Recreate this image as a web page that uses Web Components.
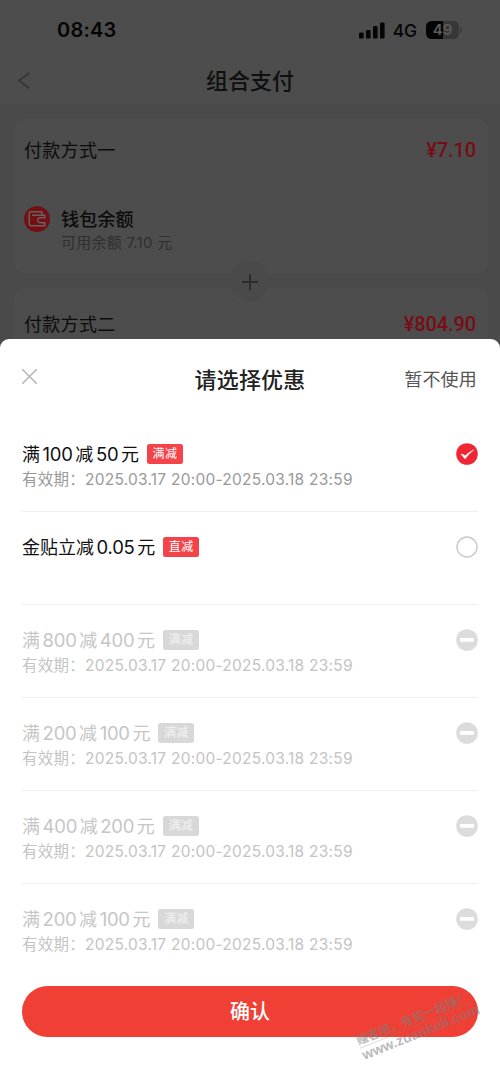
<!DOCTYPE html>
<html lang="zh-CN">
<head>
<meta charset="utf-8">
<title>组合支付</title>
<style>
html,body{margin:0;padding:0}
body{width:500px;height:1082px;overflow:hidden;background:#4a4a4a;font-family:Inter,"Noto Sans CJK SC",sans-serif;}
</style>
</head>
<body>
<pay-app></pay-app>
<script>
const define = (name, html) => {
  const t = document.createElement('template');
  t.innerHTML = html;
  customElements.define(name, class extends HTMLElement {
    constructor() {
      super();
      this.attachShadow({mode: 'open'}).appendChild(t.content.cloneNode(true));
    }
  });
};

define('status-bar', `
<style>
:host{display:flex;box-sizing:border-box;height:60px;padding:0 39px 0 57px;align-items:center;justify-content:space-between;background:#4d4d4d;color:#050505}
.time{font-size:20px;font-weight:600;line-height:24px;letter-spacing:.2px}
.right{display:flex;align-items:center}
.net{font-size:17.5px;font-weight:500;margin:1px 9px 0 8px;line-height:20px;letter-spacing:-.2px}
.bat{display:flex;align-items:center;justify-content:center;width:33px;height:18px;border-radius:5.5px;background:linear-gradient(90deg,#050505 50%,#373737 50%);color:#5c5c5c;font-size:15px;font-weight:600;line-height:18px}
.cap{width:2px;height:6px;border-radius:0 2px 2px 0;background:#3c3c3c;margin:0 -1px 0 1px}
</style>
<span class="time">08:43</span>
<div class="right">
<svg width="26" height="17" viewBox="0 0 26 17" fill="#050505"><rect x="0" y="10.5" width="4.6" height="6" rx="1.3"/><rect x="7" y="8" width="4.6" height="8.5" rx="1.3"/><rect x="14" y="4" width="4.6" height="12.5" rx="1.3"/><rect x="21" y="0.5" width="4.6" height="16" rx="1.3"/></svg>
<span class="net">4G</span><span class="bat">49</span><span class="cap"></span></div>`);

define('nav-bar', `
<style>
:host{display:grid;grid-template-columns:60px 1fr 60px;box-sizing:border-box;height:44px;align-items:center;background:#4d4d4d;color:#101010}
svg{margin:-4px 0 0 17px;display:block}
h1{margin:0;text-align:center;font-size:22px;line-height:32px;font-weight:500;padding-bottom:2px}
</style>
<svg width="14" height="17" viewBox="0 0 14 17" fill="none" stroke="#363636" stroke-width="1.6"><path d="M12.5 1 2 8.5 12 16"/></svg>
<h1><slot></slot></h1>`);

define('pay-card', `
<style>
:host{display:block;box-sizing:border-box;margin:0 12px 0 14px;padding:16px 12px 0 10px;border-radius:10px;background:#4d4d4d;color:#0c0c0c}
header{display:flex;justify-content:space-between;align-items:center;height:28px;font-size:18px;letter-spacing:.3px}
.price{color:#780d15;font:500 20px/28px Roboto,"Noto Sans CJK SC",sans-serif;letter-spacing:-.1px;padding-top:2px}
</style>
<header><slot name="title"></slot><span class="price"><slot name="price"></slot></span></header>
<slot></slot>`);

define('wallet-line', `
<style>
:host{display:flex;gap:11px;margin-top:44px}
svg{display:block;flex:none;margin-top:-1px}
.name{font-size:18px;line-height:24px;color:#0b0b0b;font-weight:500;margin-top:1px;letter-spacing:.2px}
.sub{font-size:15px;line-height:22px;color:#303030;letter-spacing:.25px}
</style>
<svg width="26" height="26" viewBox="0 0 26 26"><circle cx="13" cy="13" r="13" fill="#741014"/><g fill="none" stroke="#696063" stroke-width="1.5"><path d="M17.8 9.2V5.8H7.3Q5.2 5.8 5.2 7.9V17.6Q5.2 19.7 7.3 19.7H20.8V16.7H15.6A2.5 2.5 0 0 1 15.6 11.8H20.8V9.2H8"/></g></svg>
<div><div class="name">钱包余额</div><div class="sub">可用余额 7.10 元</div></div>`);

define('plus-joint', `
<style>
:host{display:flex;justify-content:center;align-items:center;height:15px}
span{display:flex;flex:none;align-items:center;justify-content:center;width:40px;height:40px;border-radius:50%;background:#4a4a4a;position:relative;z-index:1}
svg{display:block;margin-top:3px}
</style>
<span><svg width="16" height="16" viewBox="0 0 16 16" stroke="#2b2b2b" stroke-width="1.8"><path d="M8 0v16M0 8h16"/></svg></span>`);

define('coupon-tag', `
<style>
:host{display:flex;align-items:center;justify-content:center;width:36px;height:20px;border-radius:2.5px;background:var(--tag,#f5434a);color:var(--tag-text,#fff);font-size:12px;line-height:20px;letter-spacing:.4px}
span{padding-top:1px}
</style><span><slot></slot></span>`);

customElements.define('coupon-row', class extends HTMLElement {
  connectedCallback() {
    const state = this.getAttribute('state');
    const icons = {
      on: '<circle cx="11" cy="11" r="10.8" fill="#f02634"/><path d="M5.1 11.2 9 15.8q3.8-5.2 8.5-8.9-4.5 2.4-8.2 5.9-1.7-1.6-4.2-1.6z" fill="#fff" stroke="#fff" stroke-width=".7"/>',
      off: '<circle cx="11" cy="11" r="10" fill="#fff" stroke="#c8c8c8" stroke-width="1.4"/>',
      none: '<circle cx="11" cy="11" r="10.8" fill="#dcdcdc"/><rect x="4" y="9.1" width="14" height="3.6" rx=".6" fill="#fff"/>'
    };
    const title = this.getAttribute('label').replace(/[\d.]+/g, '<span class="n">$&</span>');
    this.attachShadow({mode: 'open'}).innerHTML = `
<style>
:host{display:flex;box-sizing:border-box;height:93.1px;padding-top:22px;justify-content:space-between;border-bottom:1px solid #efefef;color:#111}
:host([state=none]){color:#c6c6c6;--tag:#d8d8d8;--tag-text:#f2f2f2;--date:#c4c4c4}
:host(:last-of-type){border-color:transparent}
.t{display:flex;align-items:center;height:24px;font-size:18px;white-space:nowrap}
.n{font-size:18.5px;margin:1px 2.6px 0;letter-spacing:-.25px}
coupon-tag{margin:1px 0 0 8px}
.d{font-size:15.5px;line-height:22px;margin-top:4px;color:var(--date,#999);white-space:nowrap;letter-spacing:.24px}
.d b{font-weight:400;display:inline-block;width:63px}
svg{display:block;flex:none;margin-top:2px}
</style>
<div><div class="t">${title}<coupon-tag>${this.getAttribute('tag')}</coupon-tag></div>
${this.hasAttribute('date') ? `<div class="d"><b>有效期：</b>${this.getAttribute('date')}</div>` : ''}</div>
<svg width="22" height="22" viewBox="0 0 22 22">${icons[state]}</svg>`;
  }
});

define('coupon-sheet', `
<style>
:host{display:flex;flex-direction:column;box-sizing:border-box;height:743px;padding:0 22px;background:#fff;border-radius:9px 9px 0 0;position:relative;z-index:2}
header{display:grid;grid-template-columns:1fr auto 1fr;align-items:center;height:80px;flex:none}
h2{margin:0;font-size:22px;line-height:32px;font-weight:500;color:#222;letter-spacing:.2px;padding-top:1px}
.skip{justify-self:end;font-size:18px;line-height:26px;color:#555;margin:2px 1px 0 0;letter-spacing:.2px}
.x{display:block;margin-top:-5px}
.rows{height:567px;overflow:hidden;flex:none;display:flex;flex-direction:column}
::slotted(coupon-row){flex:none}
button{display:block;flex:none;width:456px;height:51px;border:0;padding:2px 0 0;border-radius:26px;background:#f04035;color:#fff;font:500 20px/49px Inter,"Noto Sans CJK SC",sans-serif}
</style>
<header><svg class="x" width="15" height="15" viewBox="0 0 15 15" stroke="#b5b5b5" stroke-width="1.5"><path d="M0 0 15 15M15 0 0 15"/></svg><h2>请选择优惠</h2><span class="skip">暂不使用</span></header>
<div class="rows"><slot></slot></div>
<button>确认</button>`);

define('water-mark', `
<style>
:host{position:absolute;z-index:3;left:354px;top:1034px;transform:rotate(-22deg);transform-origin:0 0;color:rgba(125,125,125,.55);white-space:nowrap;pointer-events:none}
.a{font-size:12px;line-height:15px;font-weight:700;border-bottom:1px solid rgba(125,125,125,.3);width:122px}
.b{font-size:14px;line-height:15px;font-weight:700;font-family:"Liberation Sans",sans-serif;letter-spacing:.1px}
</style><div class="a">赚客吧，有奖一起赚！</div><div class="b">www.zuanke8.com</div>`);

define('pay-app', `
<style>
:host{display:block;width:500px;height:1082px;position:relative;overflow:hidden}
main{box-sizing:border-box;height:235px;padding-top:15px;overflow:hidden}
.one{height:154px}
</style>
<status-bar></status-bar>
<nav-bar>组合支付</nav-bar>
<main>
<pay-card class="one"><span slot="title">付款方式一</span><span slot="price">¥7.10</span><wallet-line></wallet-line></pay-card>
<plus-joint></plus-joint>
<pay-card style="padding-top:21px;height:80px"><span slot="title">付款方式二</span><span slot="price">¥804.90</span></pay-card>
</main>
<coupon-sheet>
<coupon-row state="on" label="满100减50元" tag="满减" date="2025.03.17 20:00-2025.03.18 23:59"></coupon-row>
<coupon-row state="off" label="金贴立减0.05元" tag="直减"></coupon-row>
<coupon-row state="none" label="满800减400元" tag="满减" date="2025.03.17 20:00-2025.03.18 23:59"></coupon-row>
<coupon-row state="none" label="满200减100元" tag="满减" date="2025.03.17 20:00-2025.03.18 23:59"></coupon-row>
<coupon-row state="none" label="满400减200元" tag="满减" date="2025.03.17 20:00-2025.03.18 23:59"></coupon-row>
<coupon-row state="none" label="满200减100元" tag="满减" date="2025.03.17 20:00-2025.03.18 23:59"></coupon-row>
</coupon-sheet>
<water-mark></water-mark>`);
</script>
</body>
</html>
